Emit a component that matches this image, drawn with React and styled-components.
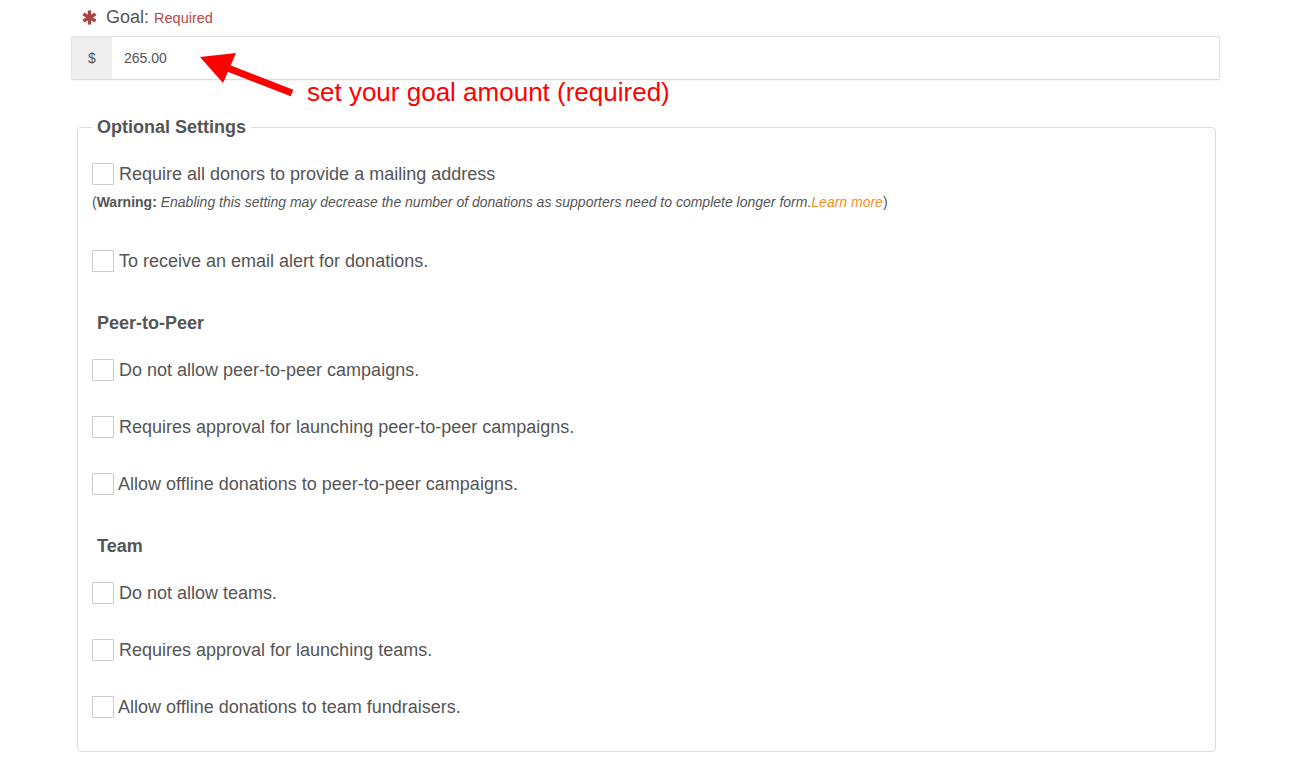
import React from "react";
import styled, { createGlobalStyle } from "styled-components";

const GlobalStyle = createGlobalStyle`
  html, body { margin: 0; padding: 0; background: #fff; }
  body { font-family: "Liberation Sans", Arial, Helvetica, sans-serif; color: #555; }
  * { box-sizing: border-box; }
`;

const Page = styled.div`
  position: relative;
  width: 1292px;
  height: 781px;
  overflow: hidden;
  padding: 7px 72px 0 71px;
`;

const GoalRow = styled.div`
  display: flex;
  align-items: center;
  height: 20px;
  padding-left: 11px;
`;

const Asterisk = styled.svg`
  width: 15px;
  height: 15px;
  margin-right: 9px;
  flex: none;
`;

const GoalLabel = styled.span`
  font-size: 18px;
  color: #555;
`;

const RequiredTag = styled.span`
  font-size: 14.5px;
  color: #b94a48;
  margin-left: 5px;
  position: relative;
  top: 1px;
`;

const InputGroup = styled.div`
  display: flex;
  margin-top: 9px;
  height: 44px;
  border: 1px solid #e2e2e2;
  border-bottom-color: #dadada;
  border-radius: 2px;
  box-shadow: 0 1px 1px rgba(0, 0, 0, 0.04);
  overflow: hidden;
`;

const Addon = styled.div`
  width: 40px;
  flex: none;
  background: #eee;
  display: flex;
  align-items: center;
  justify-content: center;
  font-size: 14px;
  color: #555;
`;

const AmountInput = styled.div`
  flex: 1;
  display: flex;
  align-items: center;
  padding-left: 12px;
  font-size: 14px;
  color: #555;
`;

const Fieldset = styled.fieldset`
  margin: 37px 4px 0 6px;
  padding: 26px 14px 33px;
  border: 1px solid #ddd;
  border-radius: 4px;
  min-width: 0;
`;

const Legend = styled.legend`
  padding: 0 5px;
  font-size: 18px;
  line-height: 20px;
  font-weight: bold;
  color: #555;
`;

const Option = styled.label`
  display: flex;
  align-items: center;
  height: 22px;
  font-size: 18px;
  color: #555;
  margin-bottom: ${(p) => p.$after ?? 35}px;
  gap: ${(p) => p.$gap ?? 5}px;
`;

const Box = styled.input.attrs({ type: "checkbox" })`
  appearance: none;
  -webkit-appearance: none;
  margin: 0;
  width: 22px;
  height: 22px;
  border: 1px solid #ccc;
  border-radius: 1px;
  background: #fff;
  flex: none;
`;

const Warning = styled.div`
  font-size: 14px;
  line-height: 20px;
  color: #555;
  margin: 7px 0 38px;
`;

const Em = styled.em`
  font-style: italic;
`;

const LearnMore = styled.a`
  color: #f0901c;
  text-decoration: none;
  font-style: italic;
`;

const SubHeading = styled.div`
  padding-left: 5px;
  font-size: 18px;
  line-height: 20px;
  font-weight: bold;
  color: #555;
  margin: ${(p) => p.$top}px 0 ${(p) => p.$bottom}px;
`;

const Annotation = styled.div`
  position: absolute;
  left: 307px;
  top: 77px;
  font-size: 26px;
  line-height: 30px;
  color: #f00;
  white-space: nowrap;
`;

const ArrowSvg = styled.svg`
  position: absolute;
  left: 195px;
  top: 48px;
  width: 105px;
  height: 52px;
  overflow: visible;
`;

export default function App() {
  return (
    <>
      <GlobalStyle />
      <Page>
        <GoalRow>
          <Asterisk viewBox="0 0 16 16">
            <g stroke="#a94442" strokeWidth="3.6" strokeLinecap="butt">
              <line x1="8" y1="0.5" x2="8" y2="15.5" />
              <line x1="1.5" y1="4.25" x2="14.5" y2="11.75" />
              <line x1="1.5" y1="11.75" x2="14.5" y2="4.25" />
            </g>
          </Asterisk>
          <GoalLabel>Goal:</GoalLabel>
          <RequiredTag>Required</RequiredTag>
        </GoalRow>
        <InputGroup>
          <Addon>$</Addon>
          <AmountInput>265.00</AmountInput>
        </InputGroup>

        <Fieldset>
          <Legend>Optional Settings</Legend>
          <Option $after={0}>
            <Box />
            Require all donors to provide a mailing address
          </Option>
          <Warning>
            (<b>Warning:</b>{" "}
            <Em>
              Enabling this setting may decrease the number of donations as
              supporters need to complete longer form.
            </Em>
            <LearnMore href="#">Learn more</LearnMore>)
          </Warning>
          <Option $after={0}>
            <Box />
            To receive an email alert for donations.
          </Option>

          <SubHeading $top={41} $bottom={26}>Peer-to-Peer</SubHeading>
          <Option>
            <Box />
            Do not allow peer-to-peer campaigns.
          </Option>
          <Option>
            <Box />
            Requires approval for launching peer-to-peer campaigns.
          </Option>
          <Option $after={0} $gap={4}>
            <Box />
            Allow offline donations to peer-to-peer campaigns.
          </Option>

          <SubHeading $top={41} $bottom={26}>Team</SubHeading>
          <Option>
            <Box />
            Do not allow teams.
          </Option>
          <Option>
            <Box />
            Requires approval for launching teams.
          </Option>
          <Option $after={0} $gap={4}>
            <Box />
            Allow offline donations to team fundraisers.
          </Option>
        </Fieldset>

        <ArrowSvg viewBox="0 0 105 52">
          <line x1="97" y1="45" x2="30" y2="19" stroke="#f00" strokeWidth="7" />
          <polygon points="5,9 41,5 28,35" fill="#f00" />
        </ArrowSvg>
        <Annotation>set your goal amount (required)</Annotation>
      </Page>
    </>
  );
}
